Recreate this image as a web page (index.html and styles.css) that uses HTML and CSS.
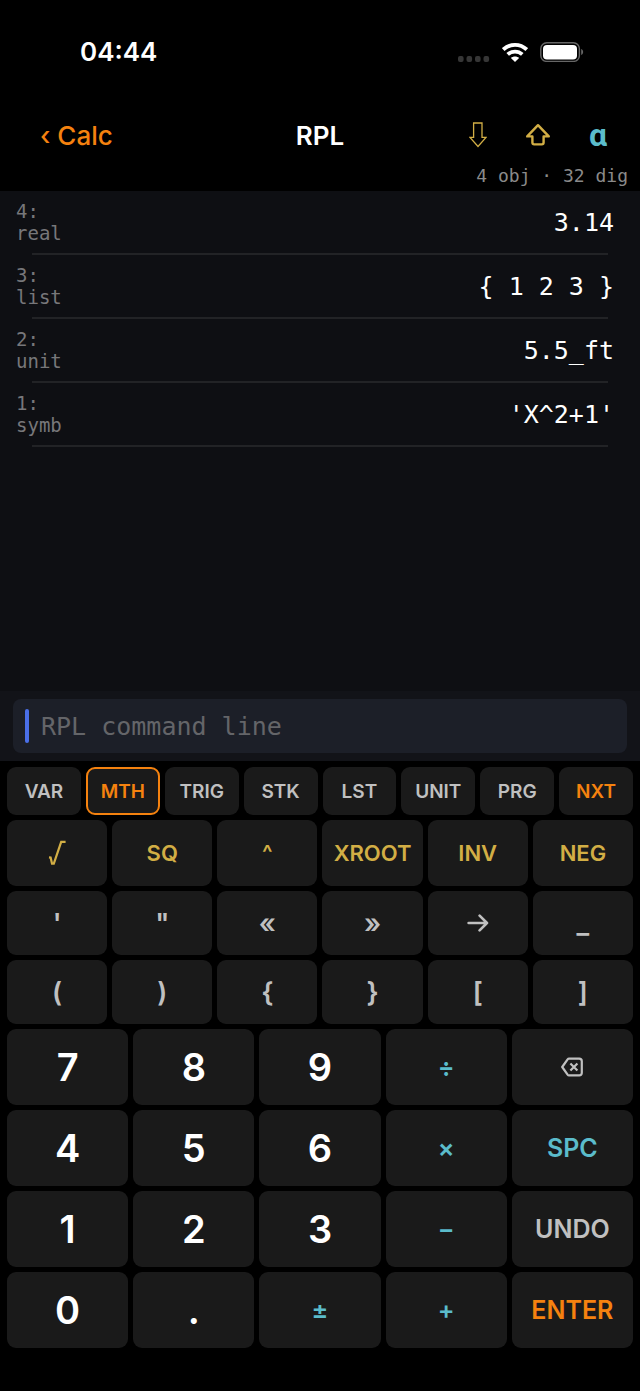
FILE: index.html
```html
<!DOCTYPE html>
<html lang="en">
<head>
    <meta charset="UTF-8">
    <meta name="viewport" content="width=device-width, initial-scale=1.0">
    <title>RPL</title>
    <link rel="stylesheet" href="styles.css">
</head>
<body>
    <!-- Status bar -->
    <div class="status-bar">
        <span class="time">04:44</span>
        <div class="status-icons">
            <svg class="signal" width="32" height="6" viewBox="0 0 32 6" fill="#363636">
                <rect x="0" y="0" width="5.6" height="6" rx="2"/>
                <rect x="8.5" y="0" width="5.6" height="6" rx="2"/>
                <rect x="17" y="0" width="5.6" height="6" rx="2"/>
                <rect x="25.5" y="0" width="5.6" height="6" rx="2"/>
            </svg>
            <svg width="26" height="20" viewBox="1 0 26 20" fill="none" stroke="#fff" stroke-width="3.8">
                <path d="M2.2 7.6C8.8 1.2 19.2 1.2 25.8 7.6"/>
                <path d="M6.7 12.4C10.9 8.6 17.1 8.6 21.3 12.4"/>
                <path d="M14 20L9.9 16C12 14 16 14 18.1 16Z" fill="#fff" stroke="none"/>
            </svg>
            <svg width="44" height="20" viewBox="0 0 44 20">
                <rect x="0.8" y="0.8" width="38.6" height="18.6" rx="6" fill="none" stroke="#666" stroke-width="1.4"/>
                <rect x="3" y="3" width="34" height="14.4" rx="4" fill="#fff"/>
                <path d="M41.2 7C43.8 8 43.8 12 41.2 13Z" fill="#666"/>
            </svg>
        </div>
    </div>

    <!-- Navigation -->
    <header class="nav">
        <button class="back-btn">‹ Calc</button>
        <h1>RPL</h1>
        <div class="shift-keys">
            <button class="shift-btn" aria-label="Right shift">
                <svg width="18" height="26" viewBox="0 0 18 26" fill="none" stroke="#d2ae45" stroke-width="1.3">
                    <path d="M4.6 1H13V15.4H17L9 24.4L1 15.4H4.6Z"/>
                </svg>
            </button>
            <button class="shift-btn" aria-label="Left shift">
                <svg width="26" height="24" viewBox="0 0 26 24" fill="none" stroke="#d2ae45" stroke-width="2.4" stroke-linejoin="round">
                    <path d="M13 2.2L23.8 13.4H18.6V19.6Q18.6 21.4 16.8 21.4H9.2Q7.4 21.4 7.4 19.6V13.4H2.2Z"/>
                </svg>
            </button>
            <button class="shift-btn alpha">α</button>
        </div>
    </header>
    <p class="info">4 obj · 32 dig</p>

    <!-- Stack -->
    <ol class="stack">
        <li>
            <div class="entry">
                <span class="level">4:<br>real</span>
                <span class="value">3.14</span>
            </div>
        </li>
        <li>
            <div class="entry">
                <span class="level">3:<br>list</span>
                <span class="value">{ 1 2 3 }</span>
            </div>
        </li>
        <li>
            <div class="entry">
                <span class="level">2:<br>unit</span>
                <span class="value">5.5_ft</span>
            </div>
        </li>
        <li>
            <div class="entry">
                <span class="level">1:<br>symb</span>
                <span class="value">'X^2+1'</span>
            </div>
        </li>
    </ol>

    <!-- Command line -->
    <div class="command">
        <div class="command-box">
            <span class="cursor"></span>
            <input type="text" placeholder="RPL command line" aria-label="RPL command line">
        </div>
    </div>

    <!-- Keypad -->
    <div class="keypad">
        <div class="row menu">
            <button>VAR</button>
            <button class="active">MTH</button>
            <button>TRIG</button>
            <button>STK</button>
            <button>LST</button>
            <button>UNIT</button>
            <button>PRG</button>
            <button class="orange">NXT</button>
        </div>
        <div class="row soft">
            <button aria-label="Square root">
                <svg width="18" height="26" viewBox="0 0 18 26" fill="none" stroke="#d2ae45" stroke-width="2.2">
                    <path d="M1 17.4L2.6 17.6L4 23.6H5.8L13.2 1.8H17.6"/>
                </svg>
            </button>
            <button>SQ</button>
            <button>^</button>
            <button>XROOT</button>
            <button>INV</button>
            <button>NEG</button>
        </div>
        <div class="row symbols">
            <button>'</button>
            <button>"</button>
            <button>«</button>
            <button>»</button>
            <button aria-label="Store">
                <svg width="22" height="18" viewBox="0 0 22 18" fill="none" stroke="#c0c0c0" stroke-width="2.6" stroke-linecap="round" stroke-linejoin="round">
                    <path d="M1.6 9H20M12.6 1.6L20 9L12.6 16.4"/>
                </svg>
            </button>
            <button>_</button>
        </div>
        <div class="row symbols">
            <button>(</button>
            <button>)</button>
            <button>{</button>
            <button>}</button>
            <button>[</button>
            <button>]</button>
        </div>
        <div class="row numbers">
            <button class="digit">7</button>
            <button class="digit">8</button>
            <button class="digit">9</button>
            <button class="operator">÷</button>
            <button aria-label="Delete">
                <svg width="22" height="20" viewBox="0 0 22 20" fill="none" stroke="#c0c0c0" stroke-width="2.2" stroke-linejoin="round">
                    <path d="M8 1.6H18.2Q20.8 1.6 20.8 4.2V15.8Q20.8 18.4 18.2 18.4H8Q7.2 18.4 6.6 17.6L1.2 10L6.6 2.4Q7.2 1.6 8 1.6Z"/>
                    <path d="M9.4 6.4L16.4 13.6M16.4 6.4L9.4 13.6"/>
                </svg>
            </button>
        </div>
        <div class="row numbers">
            <button class="digit">4</button>
            <button class="digit">5</button>
            <button class="digit">6</button>
            <button class="operator">×</button>
            <button class="teal">SPC</button>
        </div>
        <div class="row numbers">
            <button class="digit">1</button>
            <button class="digit">2</button>
            <button class="digit">3</button>
            <button class="operator">−</button>
            <button>UNDO</button>
        </div>
        <div class="row numbers">
            <button class="digit">0</button>
            <button class="digit">.</button>
            <button class="operator">±</button>
            <button class="operator">+</button>
            <button class="orange">ENTER</button>
        </div>
    </div>
</body>
</html>
```
FILE: styles.css
```css
* {
    box-sizing: border-box;
}

body {
    font-family: Inter, sans-serif;
    background-color: #000;
    color: #fff;
    display: flex;
    flex-direction: column;
    min-height: 100vh;
    margin: 0;
}

button {
    padding: 0;
    border: none;
    background: none;
    font-family: inherit;
    color: inherit;
    cursor: pointer;
}

svg {
    display: block;
}

/* Status bar */
.status-bar {
    display: flex;
    justify-content: space-between;
    align-items: center;
    padding: 36px 56px 0 80px;
}

.time {
    font-size: 26px;
    line-height: 32px;
    font-weight: 600;
}

.status-icons {
    display: flex;
    align-items: center;
    gap: 12px;
}

.signal {
    margin-top: 14px;
}

/* Navigation */
.nav {
    display: grid;
    grid-template-columns: 1fr auto 1fr;
    align-items: center;
    height: 40px;
    margin-top: 47px;
    padding: 0 12px 0 40px;
}

.back-btn {
    justify-self: start;
    color: #f5820f;
    font-size: 26px;
    font-weight: 500;
}

h1 {
    margin: 0 0 0 -28px;
    font-size: 26px;
    font-weight: 600;
}

.shift-keys {
    display: flex;
    justify-content: flex-end;
}

.shift-btn {
    display: flex;
    align-items: center;
    justify-content: center;
    width: 60px;
    height: 40px;
}

.alpha {
    color: #5bbccb;
    font-family: Roboto, sans-serif;
    font-size: 32px;
    font-weight: 700;
}

.info {
    margin: 10px 12px 4px;
    text-align: right;
    font-family: "DejaVu Sans Mono", monospace;
    font-size: 18px;
    line-height: 22px;
    color: #8a8a8a;
}

/* Stack */
.stack {
    flex: 1;
    margin: 0;
    padding: 0;
    list-style: none;
    background-color: #0e0f13;
    font-family: "DejaVu Sans Mono", monospace;
}

.stack li::after {
    content: "";
    display: block;
    height: 2px;
    margin: 0 32px;
    background-color: #222326;
}

.entry {
    display: flex;
    justify-content: space-between;
    align-items: center;
    height: 62px;
    padding: 0 26px 0 16px;
}

.level {
    font-size: 19px;
    line-height: 22px;
    color: #77777a;
}

.value {
    font-size: 25px;
}

/* Command line */
.command {
    padding: 8px 13px;
    background-color: #121318;
}

.command-box {
    display: flex;
    align-items: center;
    gap: 12px;
    height: 54px;
    padding: 0 12px;
    border-radius: 8px;
    background-color: #1c1f28;
}

.cursor {
    width: 4px;
    height: 34px;
    border-radius: 2px;
    background-color: #4a6fe8;
}

.command-box input {
    flex: 1;
    min-width: 0;
    padding: 0;
    border: none;
    outline: none;
    background: none;
    color: #fff;
    font-family: "DejaVu Sans Mono", monospace;
    font-size: 25px;
}

.command-box input::placeholder {
    color: #646569;
}

/* Keypad */
.keypad {
    display: flex;
    flex-direction: column;
    gap: 5px;
    padding: 6px 7px 43px;
}

.row {
    display: grid;
    gap: 5px;
}

.row button {
    display: flex;
    align-items: center;
    justify-content: center;
    min-width: 0;
    border-radius: 9px;
    background-color: #1a1a1a;
    color: #c0c0c0;
    font-weight: 600;
}

.menu {
    grid-template-columns: repeat(8, 1fr);
    height: 48px;
}

.menu button {
    font-size: 19px;
}

.menu .active {
    border: 2px solid #f5820f;
    color: #f5820f;
}

.soft {
    grid-template-columns: repeat(6, 1fr);
    height: 66px;
}

.soft button {
    color: #d2ae45;
    font-size: 22px;
}

.symbols {
    grid-template-columns: repeat(6, 1fr);
    height: 64px;
}

.symbols button {
    font-size: 27px;
}

.numbers {
    grid-template-columns: repeat(5, 1fr);
    height: 76px;
}

.numbers button {
    font-size: 25px;
}

.numbers .digit {
    color: #fff;
    font-size: 38px;
}

.numbers .operator {
    color: #5bbccb;
}

.row .orange {
    color: #f5820f;
}

.row .teal {
    color: #5bbccb;
}
```
